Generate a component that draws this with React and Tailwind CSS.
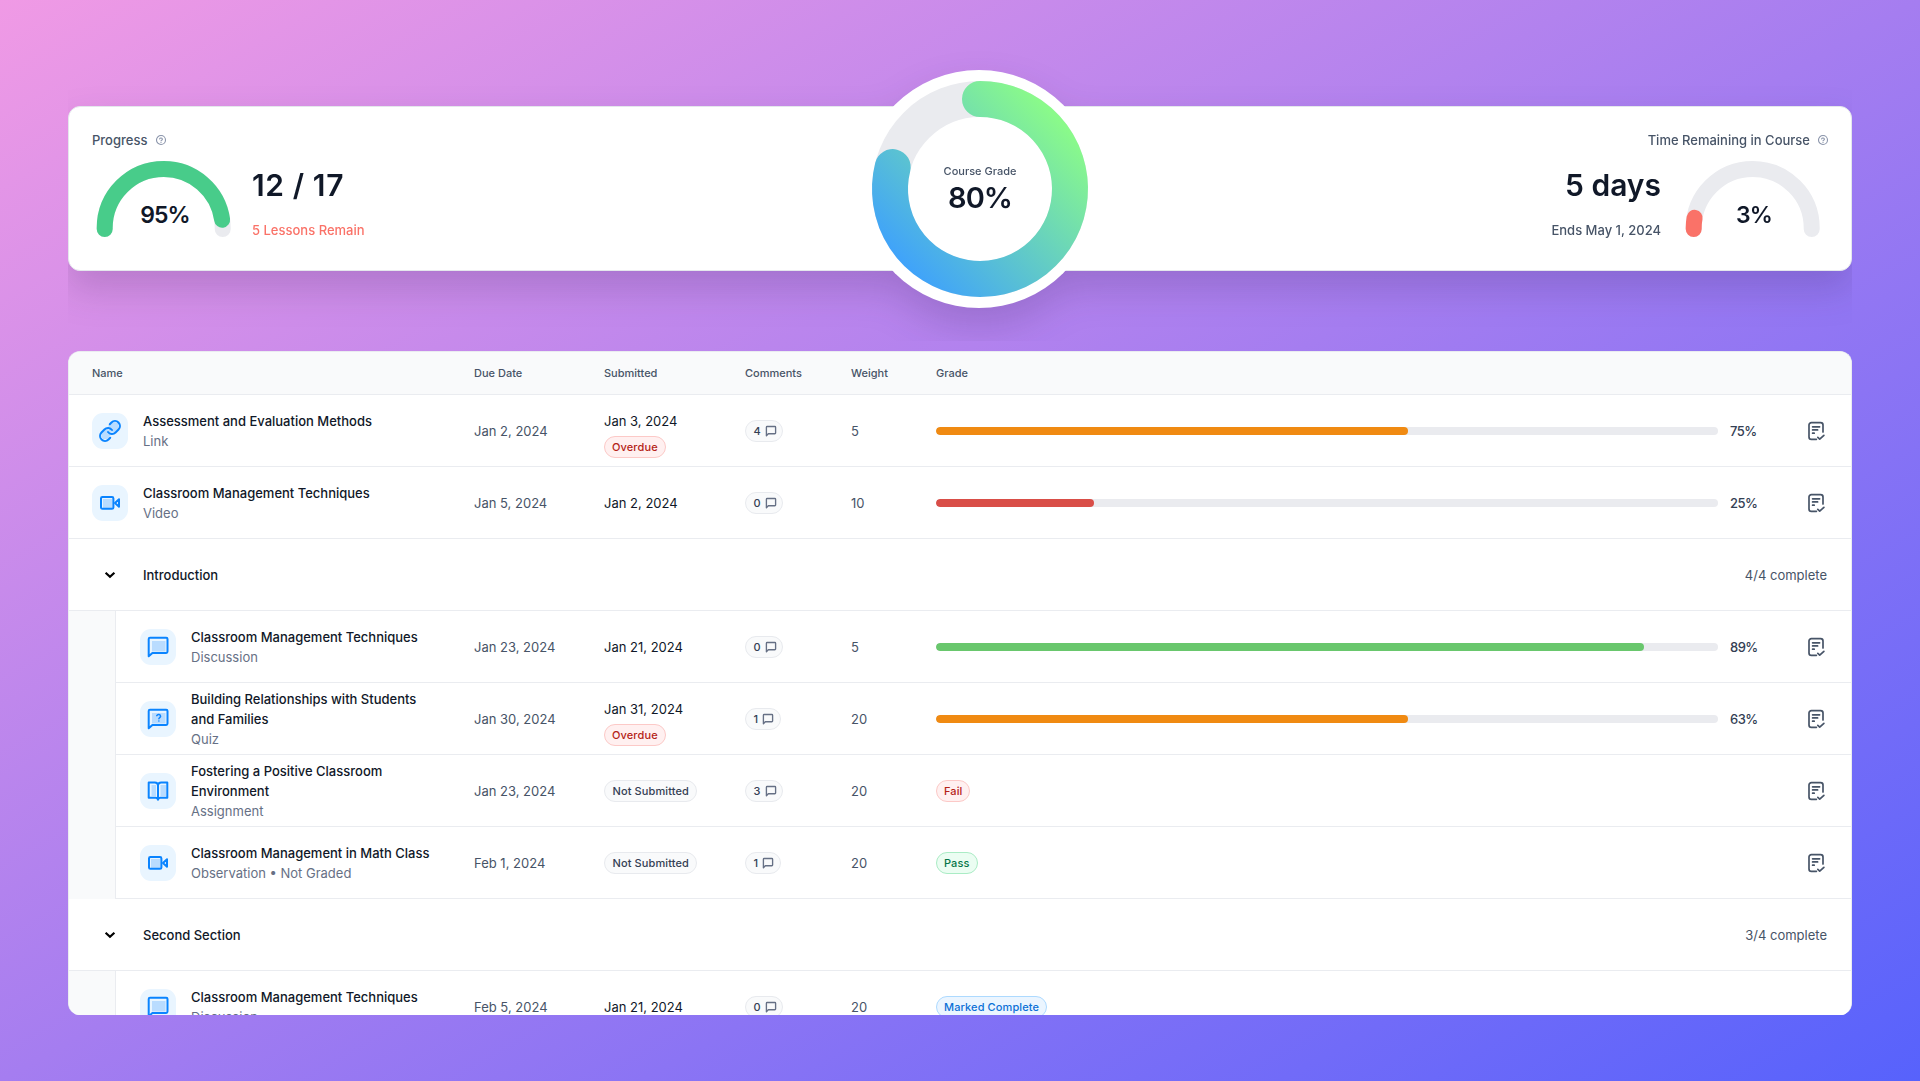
import clsx from 'clsx'

const items = [
  { type: 'link', title: 'Assessment and Evaluation Methods', kind: 'Link', due: 'Jan 2, 2024', submitted: 'Jan 3, 2024', overdue: true, comments: 4, weight: 5, score: '75%', bar: 60.4, color: 'bg-[#f08a12]' },
  { type: 'video', title: 'Classroom Management Techniques', kind: 'Video', due: 'Jan 5, 2024', submitted: 'Jan 2, 2024', comments: 0, weight: 10, score: '25%', bar: 20.2, color: 'bg-[#d94e48]' },
]

const introduction = [
  { type: 'discussion', title: 'Classroom Management Techniques', kind: 'Discussion', due: 'Jan 23, 2024', submitted: 'Jan 21, 2024', comments: 0, weight: 5, score: '89%', bar: 90.6, color: 'bg-[#69c76d]' },
  { type: 'quiz', title: 'Building Relationships with Students and Families', kind: 'Quiz', due: 'Jan 30, 2024', submitted: 'Jan 31, 2024', overdue: true, comments: 1, weight: 20, score: '63%', bar: 60.4, color: 'bg-[#f08a12]' },
  { type: 'assignment', title: 'Fostering a Positive Classroom Environment', kind: 'Assignment', due: 'Jan 23, 2024', comments: 3, weight: 20, status: 'Fail', tone: 'red' },
  { type: 'video', title: 'Classroom Management in Math Class', kind: 'Observation • Not Graded', due: 'Feb 1, 2024', comments: 1, weight: 20, status: 'Pass', tone: 'green' },
]

const secondSection = [
  { type: 'discussion', title: 'Classroom Management Techniques', kind: 'Discussion', due: 'Feb 5, 2024', submitted: 'Jan 21, 2024', comments: 0, weight: 20, status: 'Marked Complete', tone: 'blue', noFeedback: true },
]

const HelpIcon = () => (
  <svg className="w-3 h-3 text-[#8a94aa]" viewBox="0 0 12 12" fill="none" stroke="currentColor" strokeWidth="1.1" strokeLinecap="round" strokeLinejoin="round">
    <circle cx="6" cy="6" r="4.5" />
    <path d="M4.6 4.9a1.45 1.45 0 0 1 2.8.4c0 .8-1.35.9-1.35 1.5" />
    <path d="M6 8.4h.01" />
  </svg>
)

const CommentIcon = () => (
  <svg className="w-3 h-3 text-[#667085]" viewBox="0 0 12 12" fill="none" stroke="currentColor" strokeWidth="1.35" strokeLinejoin="round">
    <path d="M1.4 10.8V2.3c0-.5.3-.8.8-.8h7.6c.5 0 .8.3.8.8v5.6c0 .5-.3.8-.8.8H3.3z" />
  </svg>
)

const NoteCheckIcon = () => (
  <svg className="w-5 h-5 text-[#475467]" viewBox="0 0 20 20" fill="none" stroke="currentColor" strokeWidth="1.7" strokeLinecap="round" strokeLinejoin="round">
    <path d="M17 11V4a2.4 2.4 0 0 0-2.4-2.4H5.4A2.4 2.4 0 0 0 3 4v11.9a2.4 2.4 0 0 0 2.4 2.4h5" />
    <path d="M6.6 5.8h7M6.6 8.9h5M6.6 12.2h1.6" />
    <path d="m11.8 16.4 1.9 1.8 4.2-3.9" />
  </svg>
)

const Chevron = () => (
  <svg className="w-5 h-5 text-black" viewBox="0 0 20 20" fill="none" stroke="currentColor" strokeWidth="2.2">
    <path d="m5.6 7.7 4.4 4.1 4.4-4.1" />
  </svg>
)

const TypeIcon = ({ type }) => (
  <div className="w-9 h-9 shrink-0 rounded-[11px] bg-[#e9f5ff] flex items-center justify-center">
    <svg className="w-6 h-6" viewBox="0 0 24 24" fill="none" stroke="#0a84ff" strokeWidth="2" strokeLinecap="round" strokeLinejoin="round">
      {type === 'link' && (
        <>
          <path d="M4.7 12.7 9 9.6l5 4.2-3.6 5.8-4.8 1-2.6-3.2z" fill="#b9dcff" stroke="none" />
          <path d="m10.3 6.5 5.2-3.7 4.7 1.1.8 4.6-5 5.2-5-1.6z" fill="#b9dcff" stroke="none" />
          <path d="M10 13a5 5 0 0 0 7.54.54l3-3a5 5 0 0 0-7.07-7.07l-1.72 1.71" />
          <path d="M14 11a5 5 0 0 0-7.54-.54l-3 3a5 5 0 0 0 7.07 7.07l1.71-1.71" />
        </>
      )}
      {type === 'video' && (
        <>
          <rect x="5" y="8" width="9.5" height="9.5" fill="#b9dcff" stroke="none" />
          <rect x="3" y="6" width="12.4" height="11.8" rx="1.4" />
          <path d="M17 12 21 8.2v7.6z" />
        </>
      )}
      {(type === 'discussion' || type === 'quiz') && (
        <>
          <path d="M6 6h13.5v10.5H6z" fill="#b9dcff" stroke="none" />
          <path d="M2.7 21.3V4c0-.8.5-1.3 1.3-1.3h16.2c.8 0 1.3.5 1.3 1.3v12.6c0 .8-.5 1.3-1.3 1.3H6.4z" />
        </>
      )}
      {type === 'quiz' && (
        <>
          <path d="M10.8 8.6a2 2 0 0 1 3.8.7c0 1.2-1.7 1.4-1.7 2.5" strokeWidth="1.5" />
          <path d="M12.9 14v.01" strokeWidth="1.5" />
        </>
      )}
      {type === 'assignment' && (
        <>
          <path d="M5.5 6H10v11H5.500zM14.500 6H20v11h-5.500z" fill="#b9dcff" stroke="none" />
          <path d="M12 6.500v14.200M12 6.500a3.200 3.200 0 0 0-3.200-3.100H2.700v15.300h6.800a2.500 2.500 0 0 1 2.500 2 2.500 2.500 0 0 1 2.500-2h6.800V3.400h-6.100A3.200 3.200 0 0 0 12 6.500z" />
        </>
      )}
    </svg>
  </div>
)

const tones = {
  gray: 'bg-[#f9fafb] border-[#e8eaee] text-[#344054]',
  red: 'bg-[#fff0f0] border-[#fcc9c7] text-[#b42318]',
  green: 'bg-[#ebfdf2] border-[#aaecc5] text-[#067647]',
  blue: 'bg-[#ebf5ff] border-[#addaff] text-[#0b70d6]',
}

const Badge = ({ tone = 'gray', className = 'px-[7px]', children }) => (
  <span className={clsx('inline-flex items-center w-fit h-[22px] rounded-full border text-[11px] tracking-[0.01em] font-medium whitespace-nowrap', tones[tone], className)}>
    {children}
  </span>
)

const Gauge = ({ value, color, label }) => (
  <div className="relative w-36 h-[88px]">
    <svg className="w-36 h-[88px]" viewBox="0 0 144 88" fill="none" strokeWidth="16" strokeLinecap="round">
      <path d="M12.7 78v-1a59 59 0 0 1 118 0v1" stroke="#eaebef" />
      <path d="M12.7 78v-1a59 59 0 0 1 118 0v1" stroke={color} pathLength="100" strokeDasharray={`${value} 200`} />
    </svg>
    <span className="absolute left-0.5 right-0 top-[50px] text-center text-[23px] leading-7 font-semibold tracking-[-0.04em] text-[#101828]">{label}</span>
  </div>
)

const GradeRing = () => (
  <div className="relative w-[238px] h-[238px] rounded-full bg-white">
    <svg className="w-[238px] h-[238px]" viewBox="0 0 238 238" fill="none" strokeWidth="36" strokeLinecap="round">
      <defs>
        <linearGradient id="grade" gradientUnits="userSpaceOnUse" x1="42" y1="195" x2="194" y2="45">
          <stop stopColor="#3fa2fb" />
          <stop offset="1" stopColor="#8afa8a" />
        </linearGradient>
      </defs>
      <circle cx="120" cy="119" r="90" stroke="#eaebef" />
      <path d="M120 29a90 90 0 1 1-87.3 68.1" stroke="url(#grade)" />
    </svg>
    <div className="absolute inset-0 left-0.5 flex flex-col items-center justify-center">
      <span className="text-[11px] leading-4 font-medium text-[#475467]">Course Grade</span>
      <span className="pt-px text-[29px] leading-9 font-semibold tracking-[-0.035em] text-[#101828]">80%</span>
    </div>
  </div>
)

const Row = ({ item, nested }) => (
  <div
    className={clsx(
      'grid items-center h-[72px] pr-[25px] border-b border-[#eaecf0] text-[13px] leading-5 text-[#475467]',
      nested
        ? 'pl-6 grid-cols-[334px_130px_141px_106px_85px_1fr_20px]'
        : 'pl-[23px] grid-cols-[382px_130px_141px_106px_85px_1fr_20px]'
    )}
  >
    <div className="flex items-center gap-[15px] pr-10">
      <TypeIcon type={item.type} />
      <div>
        <p className="font-medium text-[#101828]">{item.title}</p>
        <p className="text-[#667085]">{item.kind}</p>
      </div>
    </div>
    <div>{item.due}</div>
    <div className={clsx('flex flex-col gap-[5px] text-[#101828]', item.overdue && 'pt-2')}>
      {item.submitted ? <span>{item.submitted}</span> : <Badge className="px-[7.5px]">Not Submitted</Badge>}
      {item.overdue && <Badge tone="red">Overdue</Badge>}
    </div>
    <div className="flex">
      <Badge className="pl-[7.5px] pr-[5.5px]">
        <span className="mr-1">{item.comments}</span>
        <CommentIcon />
      </Badge>
    </div>
    <div>{item.weight}</div>
    {item.status ? (
      <div className="flex"><Badge tone={item.tone}>{item.status}</Badge></div>
    ) : (
      <div className="flex items-center">
        <div className="flex-1 h-2 rounded-full bg-[#eaebef] overflow-hidden">
          <div className={clsx('h-2 rounded-full', item.color)} style={{ width: `${item.bar}%` }} />
        </div>
        <span className="w-[88px] pl-3 font-medium tracking-[-0.04em] text-[#344054]">{item.score}</span>
      </div>
    )}
    {!item.noFeedback && <NoteCheckIcon />}
  </div>
)

const Section = ({ title, complete, rows }) => (
  <>
    <div className="flex items-center h-[72px] pl-[23px] pr-6 border-b border-[#eaecf0] text-[13px] leading-5">
      <div className="w-9 flex justify-center"><Chevron /></div>
      <span className="ml-[15px] font-medium text-[#101828]">{title}</span>
      <span className="ml-auto text-[#475467]">{complete}</span>
    </div>
    <div className="flex bg-[#f9fafb]">
      <div className="w-[47px] border-r border-[#eaecf0]" />
      <div className="flex-1 bg-white">
        {rows.map((item) => <Row key={item.title} item={item} nested />)}
      </div>
    </div>
  </>
)

const Summary = () => (
  <div className="[clip-path:inset(-60px_0_-70px_0)]">
    <div className="grid grid-cols-[791px_238px_1fr] h-[165px] bg-white border border-[#e4e7ec] rounded-xl [filter:drop-shadow(0_18px_18px_rgba(40,20,70,0.18))]">
      <div className="pl-[23px] pt-[23px]">
        <div className="flex items-center gap-2 text-[13px] leading-5 font-medium text-[#475467]">
          Progress <HelpIcon />
        </div>
        <div className="flex pt-px">
          <Gauge value={95} color="#48cc8a" label="95%" />
          <div className="pl-4 pt-[15px]">
            <p className="text-[30px] leading-[38px] font-semibold tracking-[0.02em] text-[#101828]">12 / 17</p>
            <p className="mt-4 text-[13px] leading-5 font-medium text-[#fa7268]">5 Lessons Remain</p>
          </div>
        </div>
      </div>
      <div className="-mt-[37px]">
        <GradeRing />
      </div>
      <div className="pt-[23px]">
        <div className="flex items-center justify-end gap-[7px] pr-[22px] text-[13px] leading-5 font-medium text-[#475467]">
          Time Remaining in Course <HelpIcon />
        </div>
        <div className="flex justify-end pt-px pr-[26px]">
          <div className="pr-5 pt-[15px] text-right">
            <p className="text-[30px] leading-[38px] font-semibold text-[#101828]">5 days</p>
            <p className="mt-4 text-[13px] leading-5 font-medium text-[#475467]">Ends May 1, 2024</p>
          </div>
          <Gauge value={6} color="#fa7268" label="3%" />
        </div>
      </div>
    </div>
  </div>
)

const App = () => {
  return (
    <div className="w-[1920px] h-[1081px] overflow-hidden px-[68px] pt-[106px] bg-[linear-gradient(to_bottom_right,#f09ae5,#a57df0_50%,#5762fc)] font-['Inter',sans-serif]">
      <Summary />

      {/* Gradebook */}
      <div className="mt-20 h-[664px] overflow-hidden rounded-xl border border-b-0 border-[#eaecf0] bg-white">
        <div className="grid grid-cols-[382px_130px_141px_106px_85px_1fr] items-center h-[43px] px-[23px] border-b border-[#eaecf0] bg-[#f9fafb] text-[11px] font-medium text-[#475467]">
          <span>Name</span>
          <span>Due Date</span>
          <span>Submitted</span>
          <span>Comments</span>
          <span>Weight</span>
          <span>Grade</span>
        </div>
        {items.map((item) => <Row key={item.title} item={item} />)}
        <Section title="Introduction" complete="4/4 complete" rows={introduction} />
        <Section title="Second Section" complete="3/4 complete" rows={secondSection} />
      </div>
    </div>
  )
}

export default App
